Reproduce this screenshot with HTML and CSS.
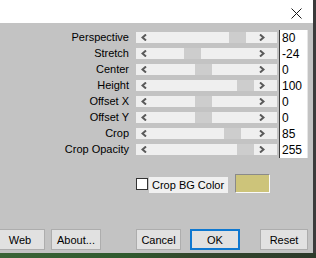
FILE: index.html
```html
<!DOCTYPE html>
<html>
<head>
<meta charset="utf-8">
<link rel="stylesheet" href="styles.css">
</head>
<body>
<div class="screen">
  <div class="dialog">
    <div class="titlebar">
      <svg class="close" width="11" height="11" viewBox="0 0 11 11"><path d="M0.5 0.5 L10.5 10.5 M10.5 0.5 L0.5 10.5" stroke="#1a1a1a" stroke-width="1"/></svg>
    </div>
    <div class="content">
      <div class="params">
        <div class="row"><span class="lbl">Perspective</span><div class="track"><svg class="arr l" width="6" height="7" viewBox="0 0 6 7"><path d="M5 0.5 L1.5 3.5 L5 6.5" fill="none" stroke="#5a5a5a" stroke-width="2"/></svg><div class="thumb" style="left:93px"></div><svg class="arr r" width="6" height="7" viewBox="0 0 6 7"><path d="M1 0.5 L4.5 3.5 L1 6.5" fill="none" stroke="#5a5a5a" stroke-width="2"/></svg></div><div class="val">80</div></div>
        <div class="row"><span class="lbl">Stretch</span><div class="track"><svg class="arr l" width="6" height="7" viewBox="0 0 6 7"><path d="M5 0.5 L1.5 3.5 L5 6.5" fill="none" stroke="#5a5a5a" stroke-width="2"/></svg><div class="thumb" style="left:48px"></div><svg class="arr r" width="6" height="7" viewBox="0 0 6 7"><path d="M1 0.5 L4.5 3.5 L1 6.5" fill="none" stroke="#5a5a5a" stroke-width="2"/></svg></div><div class="val">-24</div></div>
        <div class="row"><span class="lbl">Center</span><div class="track"><svg class="arr l" width="6" height="7" viewBox="0 0 6 7"><path d="M5 0.5 L1.5 3.5 L5 6.5" fill="none" stroke="#5a5a5a" stroke-width="2"/></svg><div class="thumb" style="left:59px"></div><svg class="arr r" width="6" height="7" viewBox="0 0 6 7"><path d="M1 0.5 L4.5 3.5 L1 6.5" fill="none" stroke="#5a5a5a" stroke-width="2"/></svg></div><div class="val">0</div></div>
        <div class="row"><span class="lbl">Height</span><div class="track"><svg class="arr l" width="6" height="7" viewBox="0 0 6 7"><path d="M5 0.5 L1.5 3.5 L5 6.5" fill="none" stroke="#5a5a5a" stroke-width="2"/></svg><div class="thumb" style="left:101px"></div><svg class="arr r" width="6" height="7" viewBox="0 0 6 7"><path d="M1 0.5 L4.5 3.5 L1 6.5" fill="none" stroke="#5a5a5a" stroke-width="2"/></svg></div><div class="val">100</div></div>
        <div class="row"><span class="lbl">Offset X</span><div class="track"><svg class="arr l" width="6" height="7" viewBox="0 0 6 7"><path d="M5 0.5 L1.5 3.5 L5 6.5" fill="none" stroke="#5a5a5a" stroke-width="2"/></svg><div class="thumb" style="left:59px"></div><svg class="arr r" width="6" height="7" viewBox="0 0 6 7"><path d="M1 0.5 L4.5 3.5 L1 6.5" fill="none" stroke="#5a5a5a" stroke-width="2"/></svg></div><div class="val">0</div></div>
        <div class="row"><span class="lbl">Offset Y</span><div class="track"><svg class="arr l" width="6" height="7" viewBox="0 0 6 7"><path d="M5 0.5 L1.5 3.5 L5 6.5" fill="none" stroke="#5a5a5a" stroke-width="2"/></svg><div class="thumb" style="left:59px"></div><svg class="arr r" width="6" height="7" viewBox="0 0 6 7"><path d="M1 0.5 L4.5 3.5 L1 6.5" fill="none" stroke="#5a5a5a" stroke-width="2"/></svg></div><div class="val">0</div></div>
        <div class="row"><span class="lbl">Crop</span><div class="track"><svg class="arr l" width="6" height="7" viewBox="0 0 6 7"><path d="M5 0.5 L1.5 3.5 L5 6.5" fill="none" stroke="#5a5a5a" stroke-width="2"/></svg><div class="thumb" style="left:88px"></div><svg class="arr r" width="6" height="7" viewBox="0 0 6 7"><path d="M1 0.5 L4.5 3.5 L1 6.5" fill="none" stroke="#5a5a5a" stroke-width="2"/></svg></div><div class="val">85</div></div>
        <div class="row"><span class="lbl">Crop Opacity</span><div class="track"><svg class="arr l" width="6" height="7" viewBox="0 0 6 7"><path d="M5 0.5 L1.5 3.5 L5 6.5" fill="none" stroke="#5a5a5a" stroke-width="2"/></svg><div class="thumb" style="left:101px"></div><svg class="arr r" width="6" height="7" viewBox="0 0 6 7"><path d="M1 0.5 L4.5 3.5 L1 6.5" fill="none" stroke="#5a5a5a" stroke-width="2"/></svg></div><div class="val">255</div></div>
      </div>
      <div class="cropbg">
        <span class="check"></span>
        <span class="cblabel">Crop BG Color</span>
        <span class="swatch"></span>
      </div>
      <div class="buttons">
        <span class="btn web">Web</span>
        <span class="btn about">About...</span>
        <span class="btn cancel">Cancel</span>
        <span class="btn ok">OK</span>
        <span class="btn reset">Reset</span>
      </div>
    </div>
  </div>
  <div class="edge"></div>
</div>
<div class="desk"></div>
</body>
</html>
```
FILE: styles.css
```css
* { box-sizing: border-box; }
html, body { margin: 0; padding: 0; }
body {
  width: 316px;
  height: 258px;
  overflow: hidden;
  font-family: "Liberation Sans", Arial, sans-serif;
  font-size: 11px;
  color: #000;
  background: #c3c3c3;
}
.screen { display: flex; height: 253px; }
.dialog { width: 313px; display: flex; flex-direction: column; }
.edge { width: 3px; background: #3b3b3b; }
.titlebar {
  height: 23px;
  background: #ffffff;
  display: flex;
  justify-content: flex-end;
  align-items: flex-start;
  padding: 8px 11px 0 0;
}
.content {
  flex: 1;
  background: #c3c3c3;
  padding-top: 7px;
  display: flex;
  flex-direction: column;
}
.params { display: flex; flex-direction: column; }
.row { display: flex; height: 16px; }
.lbl {
  width: 129px;
  margin-right: 7px;
  text-align: right;
  line-height: 15px;
  white-space: nowrap;
}
.track {
  position: relative;
  width: 141px;
  height: 11px;
  margin-top: 2px;
  margin-right: 2px;
  background: #efefef;
}
.thumb {
  position: absolute;
  top: 0;
  width: 17px;
  height: 11px;
  background: #cdcdcd;
}
.arr { position: absolute; top: 2px; }
.arr.l { left: 5px; }
.arr.r { right: 12px; }
.val {
  width: 29px;
  height: 16px;
  background: #fff;
  border-left: 1px solid #3a3a3a;
  border-right: 1px solid #e6e6e6;
  padding-left: 2px;
  font-size: 12px;
  line-height: 16px;
}
.cropbg {
  display: flex;
  align-items: center;
  margin-top: 16px;
  padding-left: 136px;
  height: 19px;
}
.check {
  width: 12px;
  height: 12px;
  border: 1px solid #333;
  background: #fff;
  margin-top: 1px;
}
.cblabel {
  width: 79px;
  height: 16px;
  margin-left: 1px;
  margin-top: 2px;
  background: #f0f0f0;
  padding-left: 3px;
  line-height: 16px;
}
.swatch {
  width: 35px;
  height: 19px;
  margin-left: 7px;
  background: #cdc47a;
  border-top: 1px solid #8a8a8a;
  border-left: 1px solid #8a8a8a;
  border-right: 1px solid #fafafa;
  border-bottom: 1px solid #fafafa;
}
.buttons {
  display: flex;
  margin-top: 36px;
  height: 21px;
}
.btn {
  height: 21px;
  background: #e1e1e1;
  border: 1px solid #adadad;
  display: flex;
  align-items: center;
  justify-content: center;
}
.web { width: 50px; margin-left: -5px; }
.about { width: 50px; margin-left: 6px; }
.cancel { width: 45px; margin-left: 35px; }
.ok { width: 50px; margin-left: 9px; border: 2px solid #0f78d0; }
.reset { width: 48px; margin-left: 20px; }
.desk {
  height: 5px;
  background: linear-gradient(90deg, #3a6336 0%, #2f5a2e 40%, #33472c 60%, #2c3a2a 100%);
}
```
